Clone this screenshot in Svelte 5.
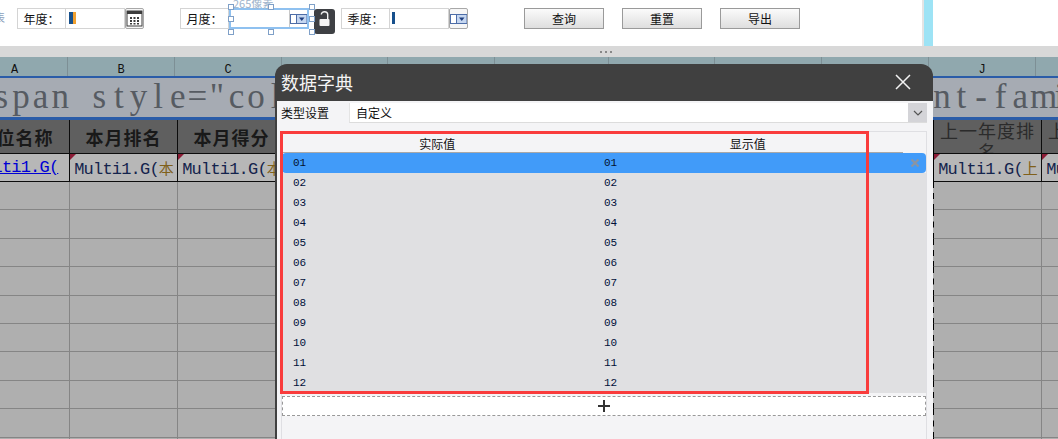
<script>
  const headLetters = [
    { l: 'A', w: 106 }, { l: 'B', w: 107 }, { l: 'C', w: 107 }, { l: 'D', w: 106 }, { l: 'E', w: 107 },
    { l: 'F', w: 114 }, { l: 'G', w: 106 }, { l: 'H', w: 107 }, { l: 'I', w: 107 }, { l: 'J', w: 107 }, { l: 'K', w: 107 }
  ];
  const titles = ['单位名称', '本月排名', '本月得分', '', '', '', '', '', '', '上一年度排名', '上一年度得分'];
  const cells = ['单位名称)', '本月排名)', '本月得分)', '', '', '', '', '', '', '上一年度排名)', '上一年度得分)'];
  const codes = ['01', '02', '03', '04', '05', '06', '07', '08', '09', '10', '11', '12'];
  const emptyRows = Array.from({ length: 10 });
  // the raw markup shown in the title row, one fixed-width box per character
  const banner = '<span style="color: #000000; font-size: 14px;  font-family'.split('');
</script>

<div class="page">
  <div class="toolbar">
    <span class="edge">表</span>
    <div class="field first">
      <span class="label">年度：</span>
      <span class="input"><i class="caret two"></i></span>
      <span class="trigger">
        <svg width="17" height="17" viewBox="0 0 17 17">
          <rect x="1" y="1" width="15" height="15" fill="#fff" stroke="#3c3c3c"/>
          <rect x="1" y="1" width="15" height="3" fill="#3c3c3c"/>
          <path d="M4 7h2v2H4zM7.500 7h2v2h-2zM11 7h2v2h-2zM4 10h2v2H4zM7.500 10h2v2h-2zM11 10h2v2h-2zM4 13h2v1.500H4zM7.500 13h2v1.500h-2zM11 13h2v1.500h-2z" fill="#3c3c3c"/>
        </svg>
      </span>
    </div>

    <div class="field month">
      <span class="label">月度：</span>
      <div class="picked">
        <span class="size-note">265像素</span>
        <span class="input"></span>
        <span class="trigger plain">
          <svg width="17" height="12" viewBox="0 0 17 12">
            <rect x="0.500" y="1.500" width="16" height="9" fill="#fff" stroke="#4d6da8"/>
            <rect x="6.500" y="2" width="10" height="8" fill="#c5d6f0"/>
            <path d="M6.500 1.500v9" stroke="#4d6da8"/>
            <path d="M9 4.500h5.500L11.750 8z" fill="#1f3f80"/>
          </svg>
        </span>
        <i class="handle h1"></i><i class="handle h2"></i><i class="handle h3"></i>
        <i class="handle h4"></i><i class="handle h5"></i>
        <i class="handle h6"></i><i class="handle h7"></i><i class="handle h8"></i>
      </div>
      <span class="lock">
        <svg width="11" height="16" viewBox="0 0 11 16">
          <path d="M2.300 3.500a3.200 2.800 0 0 1 6.400 0V8" fill="none" stroke="#f4f4f4" stroke-width="1.400"/>
          <rect x="0.500" y="8" width="10" height="7" rx="1" fill="#f4f4f4"/>
        </svg>
      </span>
    </div>

    <div class="field quarter">
      <span class="label">季度：</span>
      <span class="input"><i class="caret"></i></span>
      <span class="trigger">
        <svg width="17" height="12" viewBox="0 0 17 12">
          <rect x="0.500" y="1.500" width="16" height="9" fill="#fff" stroke="#4d6da8"/>
          <rect x="6.500" y="2" width="10" height="8" fill="#c5d6f0"/>
          <path d="M6.500 1.500v9" stroke="#4d6da8"/>
          <path d="M9 4.500h5.500L11.750 8z" fill="#1f3f80"/>
        </svg>
      </span>
    </div>

    <div class="actions">
      <button>查询</button>
      <button>重置</button>
      <button>导出</button>
    </div>

    <div class="side"></div>
  </div>

  <div class="splitter"><span></span><span></span><span></span></div>

  <div class="sheet">
    <div class="letters">
      {#each headLetters as c}
        <span style="width: {c.w}px">{c.l}</span>
      {/each}
    </div>
    <div class="banner">
      {#each banner as ch}<span>{ch}</span>{/each}
    </div>
    <div class="row heads">
      {#each titles as t, i}
        <div class="cell" class:light={i > 8} class:cut={i === 8}>{t}</div>
      {/each}
    </div>
    <div class="row data">
      {#each cells as t, i}
        <div class="cell" class:marked={i > 0 && t} class:cut={i === 8}>
          {#if i === 0}
            <a href="#top">Multi1.G(</a>
          {:else if t}
            Multi1.G(<b>{t}</b>
          {/if}
        </div>
      {/each}
    </div>
    {#each emptyRows as _}
      <div class="row blank">
        {#each cells as _c, i}
          <div class="cell" class:cut={i === 8}></div>
        {/each}
      </div>
    {/each}
  </div>

  <div class="dialog">
    <div class="dialog-head">
      <span>数据字典</span>
      <svg width="18" height="18" viewBox="0 0 18 18">
        <path d="M2 2l14 14M16 2L2 16" stroke="#f2f2f2" stroke-width="1.500" fill="none"/>
      </svg>
    </div>
    <div class="dialog-body">
      <div class="type-row">
        <span class="type-label">类型设置</span>
        <div class="select">
          <span>自定义</span>
          <span class="select-arrow">
            <svg width="10" height="6" viewBox="0 0 10 6">
              <path d="M1 1l4 4 4-4" stroke="#555" stroke-width="1.200" fill="none"/>
            </svg>
          </span>
        </div>
      </div>
      <div class="list">
        <div class="table-head">
          <span>实际值</span>
          <span>显示值</span>
        </div>
        {#each codes as code, i}
          <div class="table-row" class:active={i === 0}>
            <span>{code}</span>
            <span>{code}</span>
            {#if i === 0}
              <svg class="remove" width="10" height="10" viewBox="0 0 10 10">
                <path d="M1.500 1.500l7 7M8.500 1.500l-7 7" stroke="#8b95a3" stroke-width="2.200"/>
              </svg>
            {/if}
          </div>
        {/each}
        <div class="add-row">
          <svg width="12" height="12" viewBox="0 0 12 12">
            <path d="M0 6h12M6 0v12" stroke="#333" stroke-width="2"/>
          </svg>
        </div>
      </div>
    </div>
  </div>

  <div class="annotation"></div>
</div>

<style>
  :global(body) {
    margin: 0;
    background: #fff;
  }
  .page {
    position: relative;
    width: 1058px;
    height: 439px;
    overflow: hidden;
    font-family: "Noto Sans CJK SC", "Liberation Sans", sans-serif;
    font-size: 12px;
    color: #111;
  }

  /* toolbar */
  .toolbar {
    position: relative;
    height: 46px;
    display: flex;
    align-items: flex-start;
    padding-top: 8px;
    box-sizing: border-box;
    background: #fff;
  }
  .edge {
    width: 5px;
    overflow: hidden;
    direction: rtl;
    margin-top: 2px;
    color: #8aa0bc;
    font-size: 11px;
    line-height: 14px;
  }
  .field {
    display: flex;
    height: 21px;
  }
  .field.first { margin-left: 12px; }
  .field.month { margin-left: 36px; }
  .field.quarter { margin-left: 6px; }
  .label {
    width: 49px;
    box-sizing: border-box;
    border: 1px solid #d4d4d4;
    text-align: center;
    line-height: 19px;
  }
  .input {
    width: 59px;
    box-sizing: border-box;
    border: 1px solid #d4d4d4;
    border-left: 0;
    position: relative;
  }
  .caret {
    position: absolute;
    left: 2px;
    top: 3px;
    width: 3px;
    height: 12px;
    background: #17508c;
  }
  .caret.two {
    left: 3px;
    width: 4px;
    border-right: 3px solid #f0a030;
  }
  .trigger {
    width: 19px;
    box-sizing: border-box;
    border: 1px solid #a8a8a8;
    border-radius: 2px;
    display: flex;
    align-items: center;
    justify-content: center;
    background: #f6f6f6;
  }
  .trigger svg { flex: none; }
  .picked {
    position: relative;
    display: flex;
    width: 80px;
    box-sizing: border-box;
    border: 2px solid #8fc1f0;
  }
  .picked .input {
    width: 59px;
    border: 0;
    border-right: 1px solid #c8c8c8;
  }
  .trigger.plain {
    width: 17px;
    border: 0;
    background: #fff;
  }
  .size-note {
    position: absolute;
    left: 2px;
    top: -13px;
    font-size: 11px;
    line-height: 12px;
    color: #9db3cb;
    white-space: nowrap;
  }
  .handle {
    position: absolute;
    width: 4px;
    height: 4px;
    border: 1px solid #7fa0c8;
    background: #fff;
  }
  .h1 { left: -3px; top: -6px; }
  .h2 { left: 37px; top: -6px; }
  .h3 { left: 78px; top: -6px; }
  .h4 { left: -3px; top: 6px; }
  .h5 { left: 78px; top: 6px; }
  .h6 { left: -3px; top: 19px; }
  .h7 { left: 37px; top: 19px; }
  .h8 { left: 78px; top: 19px; }
  .lock {
    width: 21px;
    height: 25px;
    margin: 1px 0 0 5px;
    padding-bottom: 5px;
    box-sizing: border-box;
    border-radius: 3px;
    background: #3e4044;
    display: flex;
    align-items: center;
    justify-content: center;
  }
  .actions {
    display: flex;
    gap: 18px;
    margin-left: 56px;
  }
  .actions button {
    width: 80px;
    height: 21px;
    padding: 0;
    font: inherit;
    color: #111;
    border: 1px solid #9a9a9a;
    background: linear-gradient(#fbfbfb, #dedede);
  }
  .side {
    position: absolute;
    left: 922px;
    top: 0;
    width: 11px;
    height: 46px;
    box-sizing: border-box;
    border-left: 2px solid #e4e4e4;
    background: #9de3f5;
  }
  .splitter {
    height: 11px;
    background: #d8d8d8;
    display: flex;
    justify-content: center;
    align-items: center;
    gap: 3px;
    padding-left: 154px;
    box-sizing: border-box;
    width: 1058px;
  }
  .splitter span {
    width: 2px;
    height: 2px;
    background: #888;
  }

  /* sheet behind the dialog */
  .sheet {
    background: #afafaf;
    margin-left: -38px;
    width: 1200px;
    font-family: "Liberation Mono", "Noto Sans CJK SC", monospace;
  }
  .letters {
    display: flex;
    height: 19px;
    background: #90a8ae;
    border-bottom: 2px solid #2a5ca8;
    overflow: hidden;
  }
  .letters span {
    box-sizing: border-box;
    flex: none;
    border-right: 1px solid #7d8f95;
    text-align: center;
    font-size: 12px;
    line-height: 26px;
    color: #111;
  }
  .banner {
    display: flex;
    height: 39px;
    background: #a6abb3;
    border-bottom: 3px solid #2a5ca8;
    font-family: "Liberation Serif", serif;
    font-size: 35px;
    line-height: 38px;
    color: #565b62;
    overflow: hidden;
    padding-left: 10px;
  }
  .banner span {
    flex: none;
    width: 19.6px;
    text-align: center;
    white-space: pre;
  }
  .row {
    display: flex;
  }
  .cell {
    flex: none;
    width: 108px;
    box-sizing: border-box;
    border-right: 1px solid #858585;
    border-bottom: 1px solid #858585;
    overflow: hidden;
    text-align: center;
    position: relative;
  }
  .heads .cell {
    height: 34px;
    background: #5f5f5f;
    border-color: #0c0c0c;
    font-family: "Noto Sans CJK SC", sans-serif;
    font-size: 18px;
    font-weight: 700;
    line-height: 34px;
    color: #191919;
    letter-spacing: 1px;
  }
  .heads .cell.light {
    font-weight: 400;
    line-height: 21px;
    color: #2b2b2b;
  }
  .data .cell {
    height: 28px;
    background: #b7b7b7;
    border-color: #0c0c0c;
    font-size: 17px;
    letter-spacing: -0.8px;
    line-height: 22px;
    color: #14244d;
    padding: 3px 0 0 1px;
  }
  .data .cell b {
    font-family: "Noto Sans CJK SC", sans-serif;
    font-weight: 400;
    font-size: 15px;
    letter-spacing: 0;
    color: #80601a;
  }
  .data a {
    color: #0000d4;
  }
  .marked::before {
    content: "";
    position: absolute;
    left: 0;
    top: 0;
    border-top: 6px solid #8c1c36;
    border-right: 6px solid transparent;
  }
  .blank .cell {
    height: 28.4px;
  }
  .cell.cut {
    border-right: 2px solid #000;
  }
  .blank .cell.cut {
    border-right: 2px dashed #000;
  }

  /* dialog */
  .dialog {
    position: absolute;
    left: 275px;
    top: 64px;
    width: 658px;
    height: 390px;
    border-radius: 12px 12px 0 0;
    overflow: hidden;
    background: #404040;
    padding: 0 0 0 2px;
    box-sizing: border-box;
  }
  .dialog-head {
    height: 37px;
    margin-left: -2px;
    padding: 0 21px 2px 6px;
    box-sizing: border-box;
    display: flex;
    align-items: center;
    justify-content: space-between;
    color: #f4f4f4;
    font-size: 18px;
  }
  .dialog-body {
    height: 353px;
    background: #f4f4f6;
    padding: 2px 0 0 4px;
    box-sizing: border-box;
  }
  .type-row {
    display: flex;
    align-items: center;
    height: 20px;
    margin-bottom: 8px;
    width: 646px;
  }
  .type-label {
    width: 68px;
    font-size: 12px;
    line-height: 22px;
  }
  .select {
    flex: 1;
    height: 20px;
    box-sizing: border-box;
    display: flex;
    justify-content: space-between;
    align-items: center;
    background: #fff;
    border-bottom: 1px solid #dcdcdc;
    border-left: 1px solid #e4e4e4;
    padding-left: 6px;
    font-size: 12px;
  }
  .select-arrow {
    width: 19px;
    height: 19px;
    background: #d4d4d8;
    display: flex;
    align-items: center;
    justify-content: center;
  }
  .list {
    border: 1px solid #dfdfe3;
    border-bottom: 0;
    width: 646px;
    height: 320px;
    box-sizing: border-box;
  }
  .table-head {
    display: flex;
    width: 621px;
    height: 21px;
    box-sizing: border-box;
    border-bottom: 1px solid #a8a8a8;
    line-height: 24px;
    text-align: center;
  }
  .table-head span {
    flex: 1;
  }
  .table-row {
    position: relative;
    display: flex;
    height: 20px;
    align-items: center;
    background: #e0e0e2;
    font-family: "Liberation Mono", monospace;
    font-size: 11px;
    line-height: 22px;
    color: #00103a;
  }
  .table-row span {
    width: 311px;
    padding-left: 11px;
    box-sizing: border-box;
  }
  .table-row.active {
    background: #419bf9;
    border-radius: 4px;
    color: #04122e;
  }
  .remove {
    position: absolute;
    right: 6px;
    top: 5px;
  }
  .add-row {
    height: 20px;
    margin-top: 3px;
    box-sizing: border-box;
    border: 1px dashed #999;
    background: #fff;
    display: flex;
    align-items: center;
    justify-content: center;
  }

  /* red marker drawn on top of the screenshot */
  .annotation {
    position: absolute;
    left: 280px;
    top: 131px;
    width: 589px;
    height: 263px;
    box-sizing: border-box;
    border: 3px solid #f93c3c;
  }
</style>
